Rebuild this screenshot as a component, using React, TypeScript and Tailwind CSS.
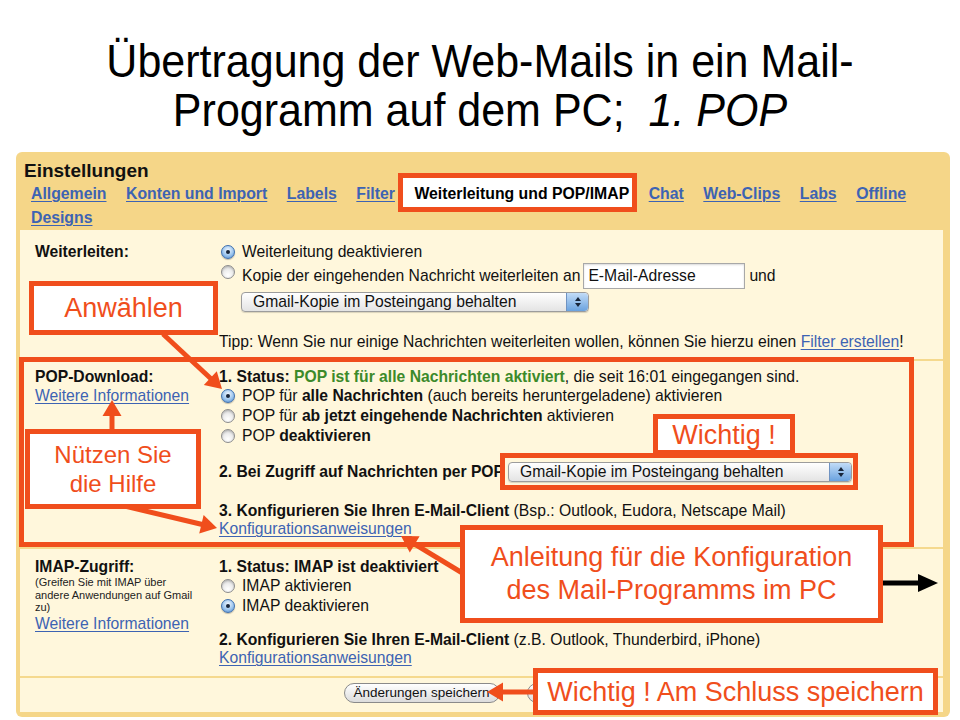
import React from "react";

const OR = "#f04e1c";

function Arrow({ x1, y1, x2, y2, color = OR, w = 5, hl = 16, hw = 19 }: { x1: number; y1: number; x2: number; y2: number; color?: string; w?: number; hl?: number; hw?: number }) {
  const dx = x2 - x1, dy = y2 - y1, len = Math.hypot(dx, dy);
  const ux = dx / len, uy = dy / len, nx = -uy, ny = ux;
  const bx = x2 - ux * hl, by = y2 - uy * hl;
  const pts = `${x2},${y2} ${bx + (nx * hw) / 2},${by + (ny * hw) / 2} ${bx - (nx * hw) / 2},${by - (ny * hw) / 2}`;
  return (
    <g>
      <line x1={x1} y1={y1} x2={bx + ux * 2} y2={by + uy * 2} stroke={color} strokeWidth={w} />
      <polygon points={pts} fill={color} />
    </g>
  );
}

function Radio({ checked }: { checked?: boolean }) {
  if (checked)
    return (
      <span className="inline-flex shrink-0 items-center justify-center w-[14px] h-[14px] rounded-full border border-[#3e6fae] bg-[radial-gradient(circle_at_50%_35%,#f2f8ff_0%,#9cc5ee_55%,#4d89cf_100%)] shadow-[0_1px_1px_rgba(0,0,0,0.25)]">
        <span className="w-[4px] h-[4px] rounded-full bg-[#17253a]" />
      </span>
    );
  return (
    <span className="inline-block shrink-0 w-[14px] h-[14px] rounded-full border border-[#8d8d8d] bg-[radial-gradient(circle_at_50%_75%,#ffffff_0%,#ececec_50%,#cdcdcd_100%)] shadow-[inset_0_1px_2px_rgba(0,0,0,0.2)]" />
  );
}

function Stepper() {
  return (
    <span className="flex items-center justify-center w-[22px] h-full rounded-r-[4px] border-l border-[#6f93c2] bg-[linear-gradient(#c2dcf7,#6aa2df)]">
      <svg width="8" height="12" viewBox="0 0 8 12">
        <polygon points="1,5 4,1 7,5" fill="#17253a" />
        <polygon points="1,7 4,11 7,7" fill="#17253a" />
      </svg>
    </span>
  );
}

function Select({ w, text }: { w: string; text: string }) {
  return (
    <div className={`flex items-center h-[20px] ${w} rounded-[4px] border border-[#9c9c9c] bg-[linear-gradient(#ffffff,#e4e4e4)] shadow-[0_1px_1px_rgba(0,0,0,0.15)] overflow-hidden`}>
      <span className="flex-1 pl-[11px] text-[15.7px] leading-[18px] whitespace-nowrap text-[#111]">{text}</span>
      <Stepper />
    </div>
  );
}

const Link = ({ children }: { children: React.ReactNode }) => (
  <span className="text-[#3d63b3] underline underline-offset-[2px] decoration-[1px]">{children}</span>
);

export default function App() {
  return (
    <div className="relative w-[960px] h-[720px] overflow-hidden bg-white font-['Liberation_Sans',Arial,sans-serif] text-[#111]">
      <h1 className="pt-[36px] text-center text-[47px] leading-[49px] font-normal text-black scale-x-[0.915]">
        Übertragung der Web-Mails in ein Mail-
        <br />
        Programm auf dem PC;{"\u00a0 "}
        <i>1. POP</i>
      </h1>

      <div className="mt-[18px] ml-[16px] w-[934px] rounded-[6px] bg-[#f5d688] pb-[5px]">
        <div className="pl-[8px] pt-[8px] text-[19px] leading-[22px] font-bold text-[#111]">Einstellungen</div>
        <div className="flex flex-wrap gap-x-[19.5px] pl-[15px] pr-[10px] text-[15.8px] leading-[24px] font-bold">
          <Link>Allgemein</Link>
          <Link>Konten und Import</Link>
          <Link>Labels</Link>
          <Link>Filter</Link>
          <span className="relative">
            <span className="absolute -left-[16px] -right-[8px] -top-[9px] -bottom-[6px] bg-white border-[5px] border-[#f04e1c]" />
            <span className="relative text-black">Weiterleitung und POP/IMAP</span>
          </span>
          <Link>Chat</Link>
          <Link>Web-Clips</Link>
          <Link>Labs</Link>
          <Link>Offline</Link>
          <Link>Designs</Link>
        </div>

        <div className="ml-[4px] mr-[7px] bg-[#fff7dc] text-[15.7px]">
          {/* Weiterleiten */}
          <div className="grid grid-cols-[199px_1fr] pt-[12px] pb-[7px]">
            <div className="pl-[15px] font-bold leading-[20px]">Weiterleiten:</div>
            <div>
              <div className="flex items-center h-[20px] pl-[2px] gap-[7px] leading-[20px]">
                <Radio checked />
                <span>Weiterleitung deaktivieren</span>
              </div>
              <div className="flex items-center h-[28px] pl-[2px] leading-[20px]">
                <span className="-mt-[8px] mr-[7px] flex"><Radio /></span>
                <span className="whitespace-nowrap">Kopie der eingehenden Nachricht weiterleiten an</span>
                <span className="ml-[3px] flex items-center w-[162px] h-[26px] bg-white border border-[#a8a8a8] shadow-[inset_0_1px_2px_rgba(0,0,0,0.15)] pl-[4px] whitespace-nowrap">E-Mail-Adresse</span>
                <span className="ml-[4px]">und</span>
              </div>
              <div className="mt-[2px] ml-[22px]">
                <Select w="w-[348px]" text="Gmail-Kopie im Posteingang behalten" />
              </div>
              <div className="mt-[20px] leading-[20px] whitespace-nowrap">
                Tipp: Wenn Sie nur einige Nachrichten weiterleiten wollen, können Sie hierzu einen <Link>Filter erstellen</Link>!
              </div>
            </div>
          </div>

          {/* POP */}
          <div className="relative grid grid-cols-[199px_1fr] border-t-[2px] border-[#f5d98e] pt-[6px] pb-[9px]">
            <div className="absolute -left-[1px] right-[29px] -top-[4px] bottom-0 border-[5px] border-[#f04e1c]" />
            <div className="pl-[15px] leading-[19px]">
              <div className="font-bold">POP-Download:</div>
              <div><Link>Weitere Informationen</Link></div>
            </div>
            <div>
              <div className="leading-[19px] whitespace-nowrap">
                <b>1. Status: </b>
                <b className="text-[#3c8a2a]">POP ist für alle Nachrichten aktiviert</b>, die seit 16:01 eingegangen sind.
              </div>
              <div className="flex items-center h-[20px] pl-[2px] gap-[7px] whitespace-nowrap">
                <Radio checked />
                <span>POP für <b>alle Nachrichten</b> (auch bereits heruntergeladene) aktivieren</span>
              </div>
              <div className="flex items-center h-[20px] pl-[2px] gap-[7px] whitespace-nowrap">
                <Radio />
                <span>POP für <b>ab jetzt eingehende Nachrichten</b> aktivieren</span>
              </div>
              <div className="flex items-center h-[20px] pl-[2px] gap-[7px] whitespace-nowrap">
                <Radio />
                <span>POP <b>deaktivieren</b></span>
              </div>
              <div className="mt-[15px] flex items-center h-[22px] whitespace-nowrap">
                <b>2. Bei Zugriff auf Nachrichten per POP</b>
                <div className="relative ml-[4px]">
                  <div className="absolute -left-[8px] -right-[6px] -top-[9px] -bottom-[8px] border-[5px] border-[#f04e1c]" />
                  <Select w="w-[344px]" text="Gmail-Kopie im Posteingang behalten" />
                </div>
              </div>
              <div className="mt-[19px] leading-[18px] whitespace-nowrap">
                <b>3. Konfigurieren Sie Ihren E-Mail-Client</b> (Bsp.: Outlook, Eudora, Netscape Mail)
              </div>
              <div className="leading-[18px]"><Link>Konfigurationsanweisungen</Link></div>
            </div>
          </div>

          {/* IMAP */}
          <div className="grid grid-cols-[199px_1fr] border-t-[2px] border-[#f5d98e] pt-[8px] pb-[9px]">
            <div className="pl-[15px]">
              <div className="font-bold leading-[19px]">IMAP-Zugriff:</div>
              <div className="text-[11px] leading-[12.5px] text-[#222]">
                (Greifen Sie mit IMAP über
                <br />
                andere Anwendungen auf Gmail
                <br />
                zu)
              </div>
              <div className="leading-[19px]"><Link>Weitere Informationen</Link></div>
            </div>
            <div>
              <div className="leading-[19px] font-bold">1. Status: IMAP ist deaktiviert</div>
              <div className="flex items-center h-[20px] pl-[2px] gap-[7px]">
                <Radio />
                <span>IMAP aktivieren</span>
              </div>
              <div className="flex items-center h-[20px] pl-[2px] gap-[7px]">
                <Radio checked />
                <span>IMAP deaktivieren</span>
              </div>
              <div className="mt-[15px] leading-[18px] whitespace-nowrap">
                <b>2. Konfigurieren Sie Ihren E-Mail-Client</b> (z.B. Outlook, Thunderbird, iPhone)
              </div>
              <div className="leading-[18px]"><Link>Konfigurationsanweisungen</Link></div>
            </div>
          </div>

          {/* Buttons */}
          <div className="flex justify-center gap-[27px] border-t-[2px] border-[#f5d98e] pt-[5px] pb-[9px]">
            <span className="flex items-center justify-center w-[156px] h-[20px] rounded-full border border-[#8a8a8a] bg-[linear-gradient(#ffffff,#dcdcdc)] text-[13.5px] text-[#111]">Änderungen speichern</span>
            <span className="w-[93px] h-[20px] rounded-full border border-[#8a8a8a] bg-[linear-gradient(#ffffff,#dcdcdc)]" />
          </div>
        </div>
      </div>

      {/* arrows */}
      <svg className="absolute left-0 top-0 pointer-events-none" width="960" height="720" viewBox="0 0 960 720">
        <Arrow x1={163} y1={334} x2={222} y2={389} />
        <Arrow x1={112} y1={432} x2={112} y2={400} />
        <Arrow x1={116} y1={504} x2={217} y2={528} />
        <Arrow x1={464} y1={574} x2={401} y2={536} />
        <Arrow x1={536} y1={692} x2={487} y2={692} />
        <Arrow x1={875} y1={583} x2={938} y2={583} color="#000" w={5} hl={20} hw={18} />
      </svg>

      {/* callouts */}
      <div className="absolute left-[29px] top-[281px] w-[189px] h-[54px] bg-white border-[5px] border-[#f04e1c] flex items-center justify-center text-[27px] leading-[30px] text-[#f04e1c]">
        Anwählen
      </div>
      <div className="absolute left-[25px] top-[429px] w-[176px] h-[80px] bg-white border-[5px] border-[#f04e1c] flex items-center justify-center text-center text-[24px] leading-[29px] text-[#f04e1c]">
        Nützen Sie
        <br />
        die Hilfe
      </div>
      <div className="absolute left-[653px] top-[414px] w-[142px] h-[41px] bg-white border-[5px] border-[#f04e1c] flex items-center justify-center text-[27px] leading-[30px] text-[#f04e1c]">
        Wichtig !
      </div>
      <div className="absolute left-[460px] top-[525px] w-[423px] h-[98px] bg-white border-[5px] border-[#f04e1c] flex items-center justify-center text-center text-[27px] leading-[33px] text-[#f04e1c]">
        Anleitung für die Konfiguration
        <br />
        des Mail-Programms im PC
      </div>
      <div className="absolute left-[533px] top-[668px] w-[405px] h-[47px] bg-white border-[5px] border-[#f04e1c] flex items-center justify-center text-[27px] leading-[30px] text-[#f04e1c] whitespace-nowrap">
        Wichtig ! Am Schluss speichern
      </div>
    </div>
  );
}
